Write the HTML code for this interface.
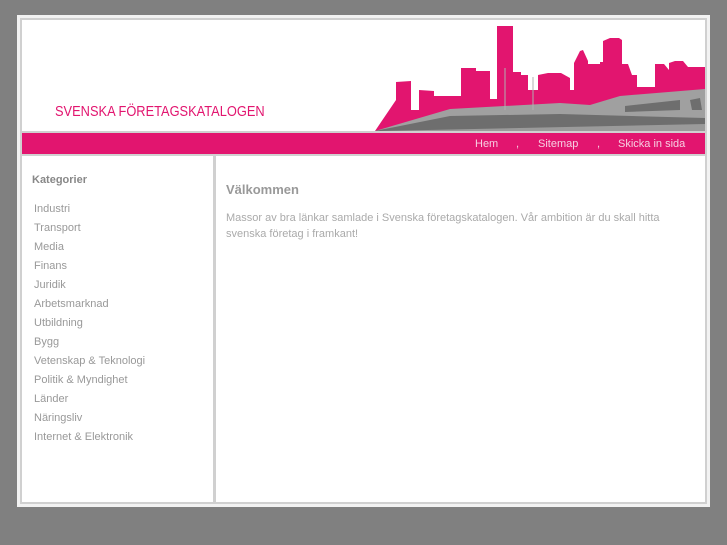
<!DOCTYPE html>
<html><head><meta charset="utf-8"><style>
*{margin:0;padding:0;box-sizing:border-box}
body{width:727px;height:545px;background:#808080;font-family:"Liberation Sans",sans-serif;position:relative;overflow:hidden}
.outer{position:absolute;left:17px;top:15px;width:693px;height:492px;background:#f2f2f2}
.inner{position:absolute;left:20px;top:18px;width:687px;height:486px;background:#d0d0d0}
.hdr{position:absolute;left:22px;top:20px;width:683px;height:111px;background:#fff;overflow:hidden}
.title{position:absolute;left:33px;top:84px;color:#e2156f;font-size:14.5px;transform:scaleX(0.885);transform-origin:0 0;white-space:nowrap}
.bar{position:absolute;left:22px;top:133px;width:683px;height:21px;background:#e2156f;color:#f6d0e2;font-size:11px}
.bar span{position:absolute;top:5px}
.left{position:absolute;left:22px;top:156px;width:191px;height:346px;background:#fff}
.right{position:absolute;left:216px;top:156px;width:489px;height:346px;background:#fff}
.left h3{position:absolute;left:10px;top:18px;font-size:11px;color:#888;font-weight:bold}
.left ul{list-style:none;position:absolute;left:12px;top:47px}
.left li{font-size:11px;color:#999;height:19px}
.right h2{position:absolute;left:10px;top:26px;font-size:13px;color:#999;font-weight:bold}
.right p{position:absolute;left:10px;top:54px;width:460px;font-size:11px;color:#aaa;line-height:16px}
</style></head><body>
<div class="outer"></div>
<div class="inner"></div>
<div class="hdr">
<div class="title">SVENSKA FÖRETAGSKATALOGEN</div>
<svg style="position:absolute;left:338px;top:0" width="345" height="111" viewBox="360 20 345 111">
<path fill="#e2156f" d="M375 131 L396 100 L396 82 L411 81 L411 110 L419 110 L419 90 L434 91 L434 96 L461 96 L461 68 L476 68 L476 71 L490 71 L490 99 L497 99 L497 26 L513 26 L513 72 L521 72 L521 75 L528 75 L528 90 L538 90 L538 75 L548 73 L561 73 L570 78 L570 90 L574 90 L574 63 L580 51 L583 50 L588 61 L588 64 L600 64 L600 62 L603 62 L603 41 L610 38 L619 38 L622 40 L622 64 L628 64 L632 75 L637 75 L637 87 L655 87 L655 64 L664 64 L669 70 L669 63 L675 61 L683 61 L688 67 L705 67 L705 131 Z"/>
<path fill="#a0a0a0" d="M375 131 L450 109 L560 103 L590 105 L620 96 L705 89 L705 131 Z"/>
<path fill="#6e6e6e" d="M375 131 L450 116 L560 114 L705 118 L705 131 Z"/>
<path fill="#9a9a9a" d="M380 131 L705 124 L705 131 Z"/>
<path fill="#6e6e6e" d="M625 106 L680 100 L680 110 L625 112 Z M690 100 L700 98 L702 110 L692 110 Z"/>
<path stroke="#b0b0b0" stroke-width="1" d="M505 68 V110 M533 77 V110"/>
</svg>
</div>
<div class="bar"><span style="left:453px">Hem</span><span style="left:494px">,</span><span style="left:516px">Sitemap</span><span style="left:575px">,</span><span style="left:596px">Skicka in sida</span></div>
<div class="left"><h3>Kategorier</h3><ul>
<li>Industri</li><li>Transport</li><li>Media</li><li>Finans</li><li>Juridik</li><li>Arbetsmarknad</li><li>Utbildning</li><li>Bygg</li><li>Vetenskap &amp; Teknologi</li><li>Politik &amp; Myndighet</li><li>Länder</li><li>Näringsliv</li><li>Internet &amp; Elektronik</li></ul></div>
<div class="right"><h2>Välkommen</h2><p>Massor av bra länkar samlade i Svenska företagskatalogen. Vår ambition är du skall hitta svenska företag i framkant!</p></div>
</body></html>
